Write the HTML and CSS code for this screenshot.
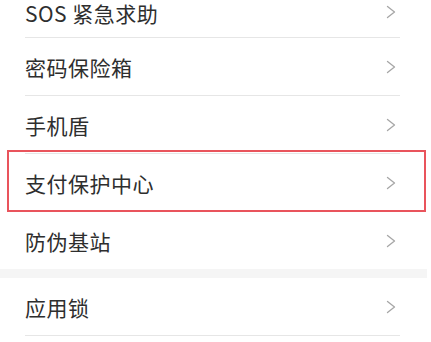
FILE: index.html
```html
<!DOCTYPE html>
<html lang="zh-CN">
<head>
<meta charset="utf-8">
<link rel="stylesheet" href="styles.css">
</head>
<body>
<div class="page">
  <div class="group">
    <div class="row first"><span class="label">SOS 紧急求助</span><svg class="chev" viewBox="0 0 10 14"><polyline points="1.5,1.5 8.5,7 1.5,12.5"/></svg></div>
    <div class="row"><span class="label">密码保险箱</span><svg class="chev" viewBox="0 0 10 14"><polyline points="1.5,1.5 8.5,7 1.5,12.5"/></svg></div>
    <div class="row"><span class="label">手机盾</span><svg class="chev" viewBox="0 0 10 14"><polyline points="1.5,1.5 8.5,7 1.5,12.5"/></svg></div>
    <div class="row highlighted"><span class="label">支付保护中心</span><svg class="chev" viewBox="0 0 10 14"><polyline points="1.5,1.5 8.5,7 1.5,12.5"/></svg></div>
    <div class="row last"><span class="label">防伪基站</span><svg class="chev" viewBox="0 0 10 14"><polyline points="1.5,1.5 8.5,7 1.5,12.5"/></svg></div>
  </div>
  <div class="band"></div>
  <div class="group">
    <div class="row"><span class="label">应用锁</span><svg class="chev" viewBox="0 0 10 14"><polyline points="1.5,1.5 8.5,7 1.5,12.5"/></svg></div>
  </div>
</div>
</body>
</html>
```
FILE: styles.css
```css
html, body {
  margin: 0;
  padding: 0;
  background: #ffffff;
}
.page {
  width: 431px;
  font-family: "Noto Sans CJK SC", "Noto Sans", sans-serif;
}
.group {
  display: flex;
  flex-direction: column;
}
.row {
  position: relative;
  box-sizing: border-box;
  height: 58px;
  margin: 0 31px 0 25px;
  border-bottom: 1px solid #e6e6e6;
  display: flex;
  align-items: center;
  justify-content: space-between;
}
.row.first {
  height: 38px;
  padding-bottom: 13px;
}
.row.last {
  border-bottom: none;
  height: 57px;
}
.label {
  font-size: 21px;
  color: #2e2e2e;
  letter-spacing: 0.5px;
  line-height: 1;
  padding-top: 2px;
}
.chev {
  width: 10px;
  height: 14px;
  margin-right: 4px;
  fill: none;
  stroke: #a6a6a6;
  stroke-width: 1.3;
  stroke-linecap: round;
  stroke-linejoin: round;
}
.highlighted::after {
  content: "";
  position: absolute;
  top: -4px;
  bottom: -1px;
  left: -18px;
  right: -26px;
  border: 2px solid #e9545c;
  pointer-events: none;
}
.band {
  height: 9px;
  margin-right: 4px;
  background: #f5f5f5;
}
```
